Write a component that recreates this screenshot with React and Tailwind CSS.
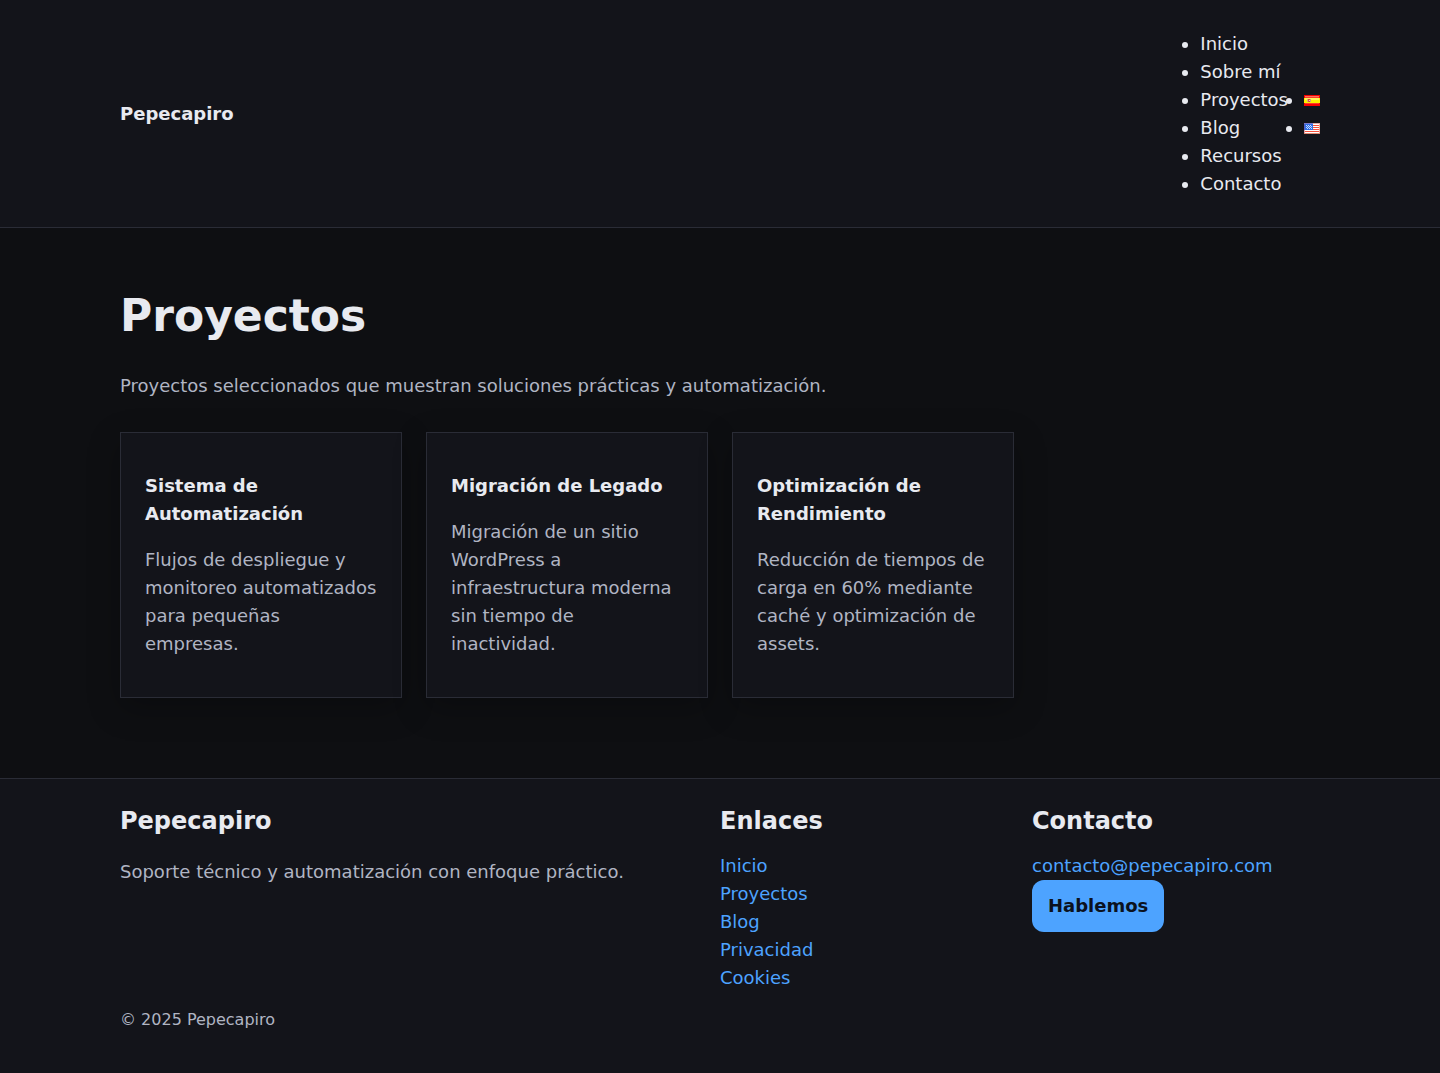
const navItems = ['Inicio', 'Sobre mí', 'Proyectos', 'Blog', 'Recursos', 'Contacto'];

const projects = [
  {
    title: 'Sistema de Automatización',
    text: 'Flujos de despliegue y monitoreo automatizados para pequeñas empresas.',
  },
  {
    title: 'Migración de Legado',
    text: 'Migración de un sitio WordPress a infraestructura moderna sin tiempo de inactividad.',
  },
  {
    title: 'Optimización de Rendimiento',
    text: 'Reducción de tiempos de carga en 60% mediante caché y optimización de assets.',
  },
];

const footerLinks = ['Inicio', 'Proyectos', 'Blog', 'Privacidad', 'Cookies'];

function SpainFlag() {
  return (
    <svg width="16" height="11" viewBox="0 0 16 11" shapeRendering="crispEdges" aria-hidden="true">
      <rect width="16" height="11" fill="#f80000" />
      <rect x="1" y="1" width="14" height="1" fill="#fe6f5a" />
      <rect x="1" y="2" width="14" height="1" fill="#f93c2c" />
      <rect x="0" y="3" width="16" height="5" fill="#fcf000" />
      <rect x="1" y="3" width="14" height="2" fill="#fdf45a" />
      <rect x="1" y="8" width="14" height="1" fill="#ff3a2a" />
      <rect x="3" y="4" width="1" height="3" fill="#e0b070" />
      <rect x="4" y="4" width="2" height="1" fill="#d05038" />
      <rect x="4" y="5" width="1" height="2" fill="#d8604c" />
      <rect x="5" y="5" width="1" height="1" fill="#f4c8b8" />
      <rect x="5" y="6" width="1" height="1" fill="#c8483c" />
      <rect x="6" y="4" width="1" height="3" fill="#d8a078" />
    </svg>
  );
}

function UsaFlag() {
  return (
    <svg width="16" height="11" viewBox="0 0 16 11" shapeRendering="crispEdges" aria-hidden="true">
      <rect width="16" height="11" fill="#ffffff" />
      <rect width="16" height="1" fill="#e0a8a0" />
      <rect x="9" y="2" width="7" height="1" fill="#f8503c" />
      <rect x="9" y="4" width="7" height="1" fill="#f8503c" />
      <rect x="9" y="6" width="7" height="1" fill="#f8503c" />
      <rect x="1" y="8" width="15" height="1" fill="#f8503c" />
      <rect x="0" y="10" width="16" height="1" fill="#e08870" />
      <rect x="15" y="1" width="1" height="9" fill="#f0a898" />
      <rect x="0" y="0" width="9" height="7" fill="#2f6fe8" />
      <rect x="0" y="0" width="9" height="1" fill="#7a78c8" />
      <rect x="0" y="1" width="1" height="6" fill="#5a60c0" />
      <rect x="0" y="7" width="1" height="3" fill="#d8a0a8" />
      <path
        d="M2 2h1v1h-1zM4 2h1v1h-1zM6 2h1v1h-1zM3 3h1v1h-1zM5 3h1v1h-1zM7 3h1v1h-1zM2 4h1v1h-1zM4 4h1v1h-1zM6 4h1v1h-1zM3 5h1v1h-1zM5 5h1v1h-1zM7 5h1v1h-1z"
        fill="#c8dcff"
      />
    </svg>
  );
}

export default function App() {
  return (
    <div className="flex min-h-screen flex-col bg-[#0e0f12] font-['DejaVu_Sans',sans-serif] text-[18px] leading-[28px] text-[#e8eaf0]">
      <header className="border-b border-[#2a2c36] bg-[#13141a] pt-[30px] pb-[29px]">
        <div className="mx-auto flex max-w-[1248px] items-center justify-between px-6">
          <a href="#inicio" className="font-bold">Pepecapiro</a>
          <nav aria-label="Principal" className="flex items-center gap-4">
            <ul className="list-disc">
              {navItems.map((item) => (
                <li key={item}><a href="#nav">{item}</a></li>
              ))}
            </ul>
            <ul className="list-disc">
              <li><a href="#es" aria-label="Español" className="inline-block"><SpainFlag /></a></li>
              <li><a href="#en" aria-label="English" className="inline-block"><UsaFlag /></a></li>
            </ul>
          </nav>
        </div>
      </header>

      <main className="mx-auto w-full max-w-[1248px] px-6 pt-[60px] pb-20">
        <h1 className="text-[44px] leading-[56px] font-bold">Proyectos</h1>
        <p className="mt-7 text-[#b0b5c3]">
          Proyectos seleccionados que muestran soluciones prácticas y automatización.
        </p>
        <div className="mt-8 grid grid-cols-[repeat(auto-fill,minmax(260px,1fr))] gap-6">
          {projects.map((project) => (
            <article
              key={project.title}
              className="border border-[#2a2c36] bg-[#13141a] px-6 py-[39px] shadow-[0_10px_30px_rgba(0,0,0,0.25)]"
            >
              <h3 className="font-bold">{project.title}</h3>
              <p className="mt-[18px] text-[#b0b5c3]">{project.text}</p>
            </article>
          ))}
        </div>
      </main>

      <footer className="grow border-t border-[#2a2c36] bg-[#13141a] pt-6 pb-10">
        <div className="mx-auto max-w-[1248px] px-6">
          <div className="grid gap-6 md:grid-cols-[2fr_1fr_1fr]">
            <div>
              <h2 className="text-[24px] leading-[36px] font-bold">Pepecapiro</h2>
              <p className="mt-[19px] text-[#b0b5c3]">
                Soporte técnico y automatización con enfoque práctico.
              </p>
            </div>
            <div>
              <h2 className="text-[24px] leading-[36px] font-bold">Enlaces</h2>
              <ul className="mt-[13px] text-[#4da3ff]">
                {footerLinks.map((item) => (
                  <li key={item}><a href="#enlace">{item}</a></li>
                ))}
              </ul>
            </div>
            <div>
              <h2 className="text-[24px] leading-[36px] font-bold">Contacto</h2>
              <div className="mt-[13px] flex flex-col items-start">
                <a href="mailto:contacto@pepecapiro.com" className="text-[#4da3ff]">
                  contacto@pepecapiro.com
                </a>
                <a href="#hablemos" className="rounded-xl bg-[#4da3ff] px-4 py-3 font-bold text-[#0b1220]">
                  Hablemos
                </a>
              </div>
            </div>
          </div>
          <p className="mt-4 text-[16px] leading-6 text-[#b0b5c3]">© 2025 Pepecapiro</p>
        </div>
      </footer>
    </div>
  );
}
